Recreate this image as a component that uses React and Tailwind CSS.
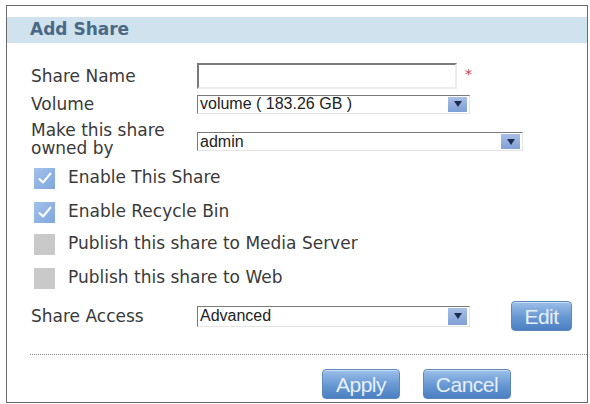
import React from "react";

const SelectBox = ({ value, className }) => (
    <div className={`flex items-stretch bg-white border border-t-[#7a7a7a] border-l-[#7a7a7a] border-r-[#e4e4e4] border-b-[#e4e4e4] ${className}`}>
        <span className="flex-1 pl-[2px] text-[16px] leading-none flex items-center text-[#222] font-['Liberation_Sans',Arial,sans-serif]">{value}</span>
        <span className="w-[19px] my-[1px] mr-[2px] bg-gradient-to-b from-[#a9bfe6] to-[#7f9fd6] flex items-center justify-center">
            <svg width="8" height="6" viewBox="0 0 8 6"><path d="M0 0 L8 0 L4 6 Z" fill="#1d2d4d" /></svg>
        </span>
    </div>
);

const CheckBox = ({ checked }) => (
    <span className={`w-[21px] h-[21px] flex items-center justify-center ${checked ? "bg-gradient-to-br from-[#a3c1ec] to-[#7fa6dc]" : "bg-[#c9c9c9]"}`}>
        {checked && (
            <svg width="16" height="14" viewBox="0 0 16 14">
                <path d="M2.5 8 L6 11.5 L13.5 2.5" stroke="#ffffff" strokeWidth="2" fill="none" strokeLinecap="round" strokeLinejoin="round" />
            </svg>
        )}
    </span>
);

const BlueButton = ({ children, className }) => (
    <button className={`h-[30px] rounded-[4px] border border-[#5d88bd] bg-gradient-to-b from-[#9cc0e8] via-[#6b9ad4] to-[#4a7fc1] text-[#e6f0fb] text-[21px] leading-none tracking-[-0.5px] font-['Liberation_Sans',Arial,sans-serif] shadow-[inset_0_1px_0_#c9ddf4] ${className}`}>
        {children}
    </button>
);

const Row = ({ label, children, className }) => (
    <div className={`flex items-center ${className}`}>
        <div className="w-[190px] shrink-0 pl-[24px] leading-[18px]">{label}</div>
        {children}
    </div>
);

const App = () => {
    return (
        <div className="w-[590px] h-[404px] bg-white pt-[5px] pl-[6px] overflow-hidden font-['DejaVu_Sans',Verdana,sans-serif] text-[17px] text-[#3a3a3a]">
            <div className="w-[582px] h-[398px] border border-[#6a6a6a] pt-[11px]">
                <div className="h-[26px] bg-[#cfe2ee] flex items-center pl-[23px]">
                    <h2 className="font-bold text-[#4b6985] text-[17px]">Add Share</h2>
                </div>

                <Row label="Share Name" className="mt-[20px] h-[26px]">
                    <div className="w-[260px] h-[26px] bg-white border-2 border-t-[#7a7a7a] border-l-[#7a7a7a] border-r-[#ececec] border-b-[#ececec]" />
                    <span className="ml-[8px] text-[#d23b3b] text-[14px] -mt-[4px]">*</span>
                </Row>

                <Row label="Volume" className="mt-[6px] h-[18px]">
                    <SelectBox value="volume ( 183.26 GB )" className="w-[273px] h-[19px]" />
                </Row>

                <Row label={<>Make this share<br />owned by</>} className="mt-[8px] h-[36px]">
                    <SelectBox value="admin" className="w-[326px] h-[19px] mt-[5px]" />
                </Row>

                <div className="pl-[27px] mt-[10px] flex flex-col">
                    <label className="flex items-center gap-[13px] h-[22px]"><CheckBox checked />Enable This Share</label>
                    <label className="flex items-center gap-[13px] h-[22px] mt-[12px]"><CheckBox checked />Enable Recycle Bin</label>
                    <label className="flex items-center gap-[13px] h-[22px] mt-[10px]"><CheckBox />Publish this share to Media Server</label>
                    <label className="flex items-center gap-[13px] h-[22px] mt-[12px]"><CheckBox />Publish this share to Web</label>
                </div>

                <Row label="Share Access" className="mt-[12px] h-[30px]">
                    <SelectBox value="Advanced" className="w-[273px] h-[21px]" />
                    <BlueButton className="ml-[41px] w-[61px]">Edit</BlueButton>
                </Row>

                <div className="ml-[23px] mt-[23px] border-t border-dotted border-[#8a8a8a]" />

                <div className="flex justify-end gap-[23px] pr-[76px] mt-[14px]">
                    <BlueButton className="w-[78px]">Apply</BlueButton>
                    <BlueButton className="w-[88px]">Cancel</BlueButton>
                </div>
            </div>
        </div>
    );
};

export default App;
